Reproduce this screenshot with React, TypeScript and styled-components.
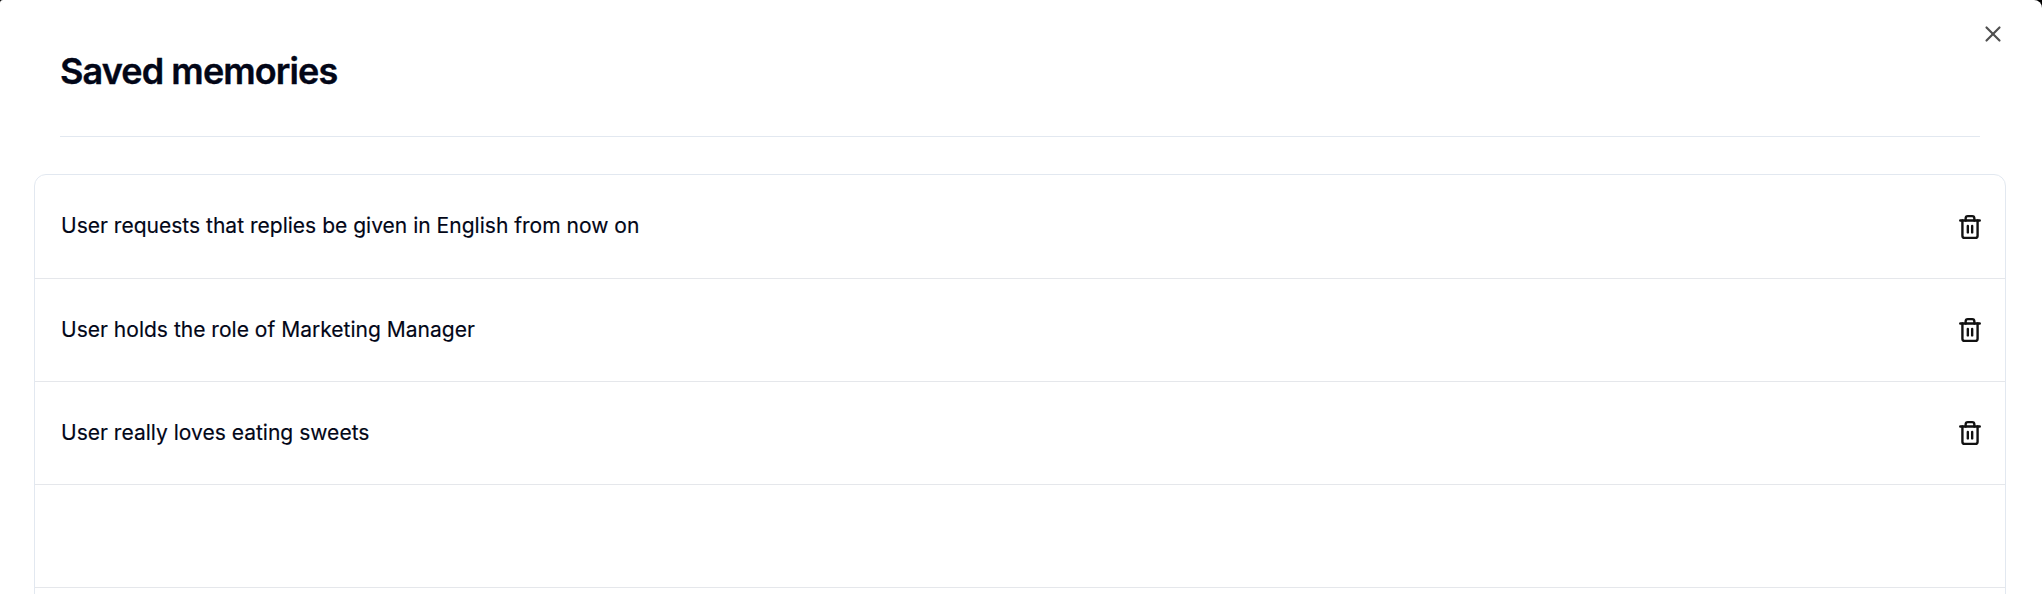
import React from "react";
import styled, { createGlobalStyle } from "styled-components";
import { Trash2, X } from "lucide-react";

const Global = createGlobalStyle`
  *{box-sizing:border-box}
  body{margin:0;background:#000;overflow:hidden;font-family:Inter,"Liberation Sans",sans-serif;color:#020617}
`;
const Dialog = styled.main`
  position:relative;
  height:594px;
  overflow:hidden;
  background:#fff;
  border-radius:3px 8px 0 0;
  padding:0 36px 0 34px;
`;
const Header = styled.header`
  margin:0 26px;
  height:137px;
  padding-top:45px;
  border-bottom:1px solid #e2e8f0;
`;
const Title = styled.h1`
  margin:0;
  font-size:36px;
  line-height:52px;
  font-weight:600;
  letter-spacing:-0.9px;
  -webkit-text-stroke:0.4px currentColor;
`;
const Close = styled.button`
  position:absolute;
  top:18px;
  right:33px;
  width:32px;
  height:32px;
  padding:0;
  border:0;
  background:none;
  color:#505050;
  display:grid;
  place-items:center;
`;
const List = styled.ul`
  list-style:none;
  margin:37px 0 0;
  padding:0;
  border:1px solid #e2e8f0;
  border-radius:12px;
`;
const Row = styled.li`
  height:103px;
  padding:0 22px 0 26px;
  display:flex;
  align-items:center;
  justify-content:space-between;
  border-bottom:1px solid #e5e7eb;
  font-size:21.04px;
  line-height:32px;
  &:first-child{height:104px}
`;
const Memory = styled.span`
  -webkit-text-stroke:0.15px currentColor;
  ${Row}:first-child &{padding-bottom:1px}
`;
const Delete = styled.button`
  padding:0;
  border:0;
  background:none;
  color:#111;
  display:flex;
`;

const memories = [
  "User requests that replies be given in English from now on",
  "User holds the role of Marketing Manager",
  "User really loves eating sweets",
  "",
  "",
];

export default function App() {
  return (
    <>
      <Global />
      <Dialog>
        <Header><Title>Saved memories</Title></Header>
        <Close aria-label="Close"><X size={26} strokeWidth={2} /></Close>
        <List>
          {memories.map((text, i) => (
            <Row key={i}>
              <Memory>{text}</Memory>
              {text && <Delete aria-label="Delete memory"><Trash2 size={26} strokeWidth={2.2} /></Delete>}
            </Row>
          ))}
        </List>
      </Dialog>
    </>
  );
}
